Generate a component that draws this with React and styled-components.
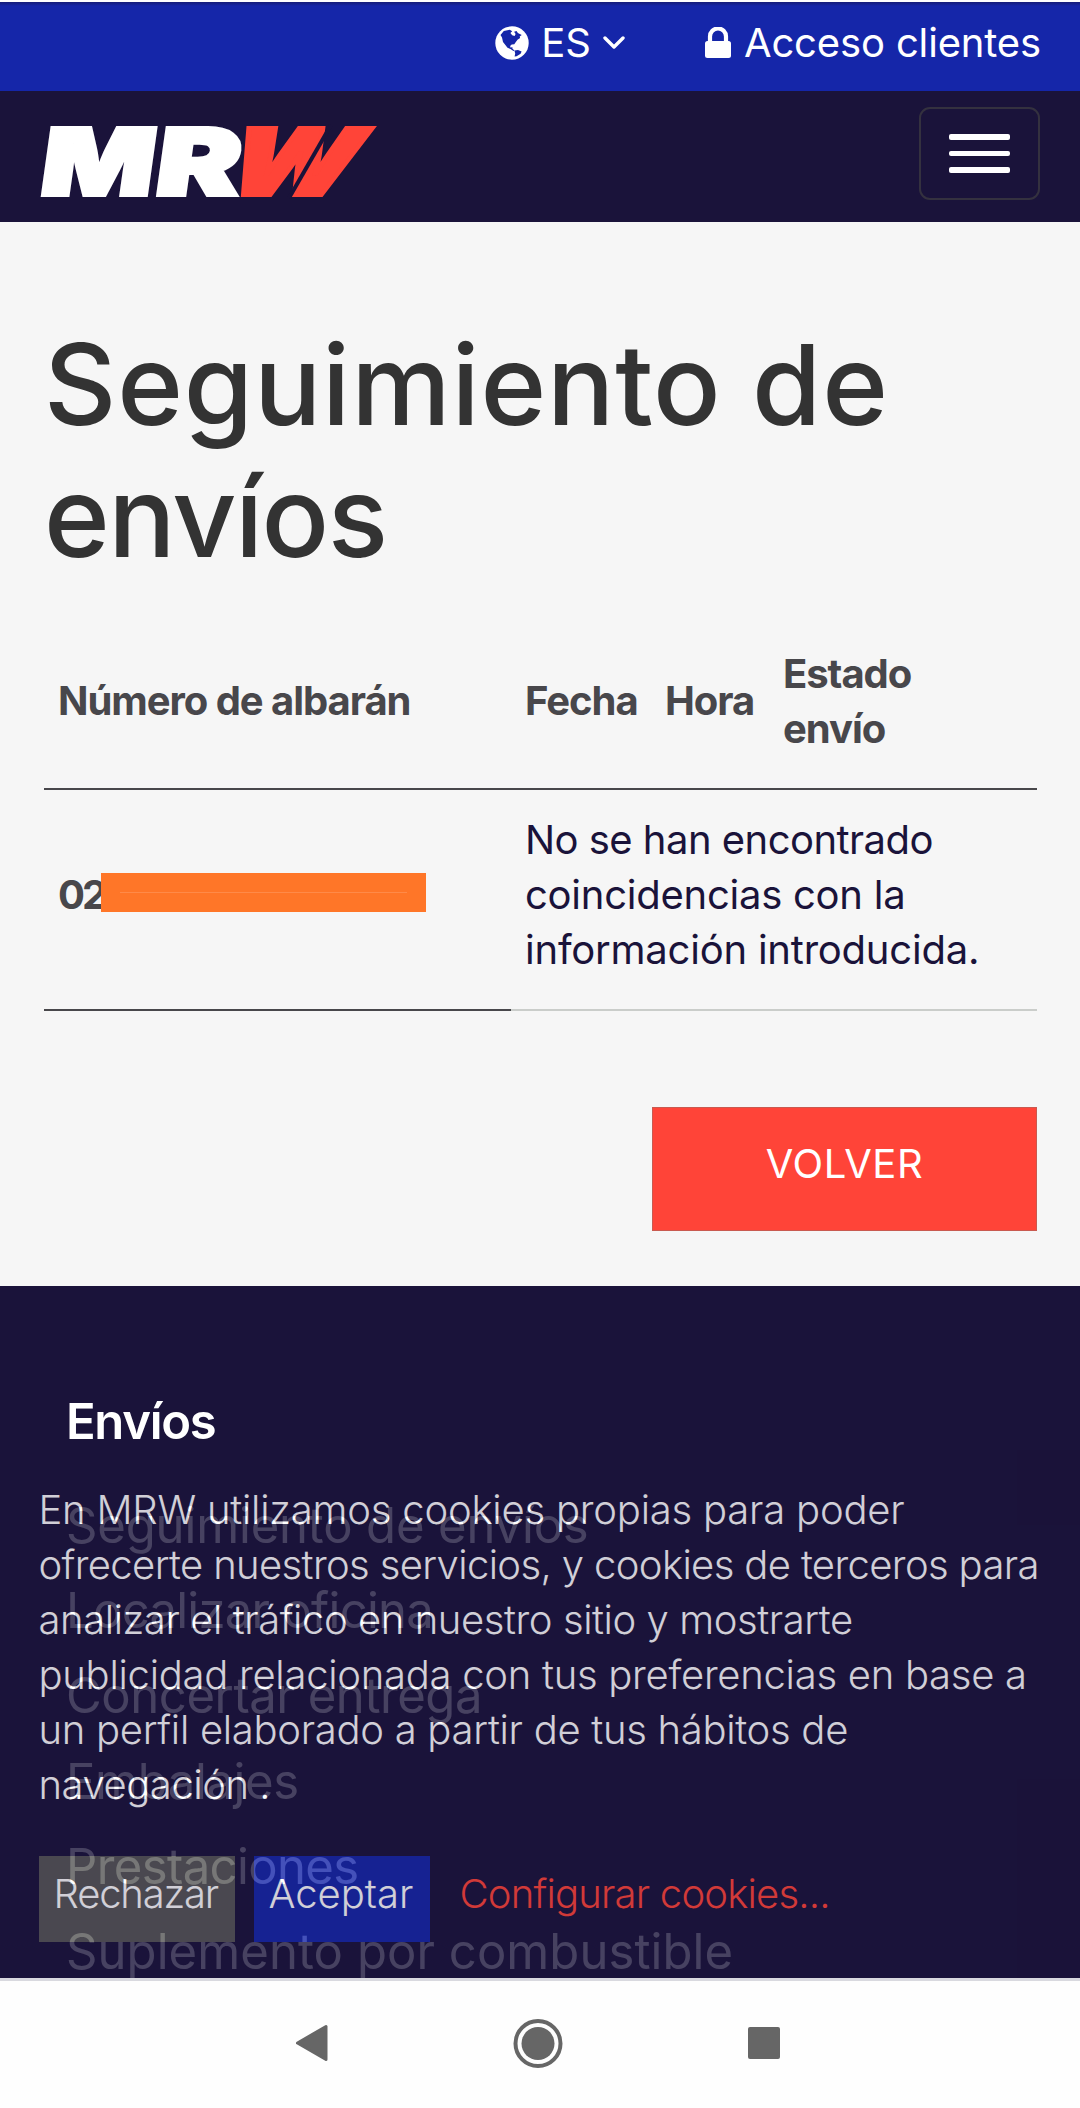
import React from 'react';
import styled, { createGlobalStyle } from 'styled-components';

const GlobalStyle = createGlobalStyle`
  * { box-sizing: border-box; }
  html, body { margin: 0; padding: 0; background: #fefefe; }
  body { font-family: Inter, "Liberation Sans", sans-serif; font-size: 40px; line-height: 55px; }
`;

const Page = styled.div`
  width: 1080px;
  height: 2108px;
  overflow: hidden;
  display: flex;
  flex-direction: column;
  border-top: 2px solid #fefefe;
`;

const TopBar = styled.div`
  height: 89px;
  flex: none;
  display: flex;
  justify-content: flex-end;
  align-items: flex-start;
  padding: 13px 39px 0 0;
  background: linear-gradient(#151c78 0, #1526a9 4px);
  color: #fff;
`;

const TopItem = styled.a`
  display: flex;
  align-items: center;
  margin-left: ${(p) => p.$before || 0}px;
  gap: ${(p) => p.$gap}px;
  letter-spacing: ${(p) => p.$ls || 0}px;
`;

const NavBar = styled.header`
  height: 131px;
  flex: none;
  display: flex;
  justify-content: space-between;
  align-items: flex-start;
  padding: 16px 40px 0 41px;
  background: #1a133a;
`;

const Logo = styled.svg`
  margin-top: 19px;
  overflow: visible;
  font-family: Inter, sans-serif;
  font-weight: 900;
`;

const MenuButton = styled.button`
  width: 121px;
  height: 93px;
  padding: 0;
  border: 2px solid #34313f;
  border-radius: 11px;
  background: none;
  display: flex;
  flex-direction: column;
  align-items: center;
  justify-content: center;
  gap: 11px;
`;

const MenuBar = styled.span`
  width: 61px;
  height: 5.6px;
  border-radius: 2px;
  background: #fff;
`;

const Main = styled.main`
  height: 1064px;
  flex: none;
  padding: 96px 43px 0 44px;
  background: #f6f6f6;
  display: flex;
  flex-direction: column;
`;

const Title = styled.h1`
  margin: 0 0 32px;
  font-size: 112px;
  line-height: 132px;
  font-weight: 500;
  color: #333;
`;

const TableRow = styled.div`
  display: grid;
  grid-template-columns: ${(p) => (p.$head ? '467px 140px 118px 268px' : '467px 526px')};
  height: ${(p) => (p.$head ? 176 : 221)}px;
`;

const Cell = styled.div`
  display: flex;
  flex-direction: column;
  justify-content: center;
  padding: ${(p) => (p.$body ? '21px 0 32px 14px' : '31px 0 32px 14px')};
  border-bottom: 2px solid ${(p) => (p.$faint ? '#cacdca' : '#48474b')};
  font-weight: ${(p) => (p.$faint ? 400 : 700)};
  letter-spacing: ${(p) => (p.$faint ? 0 : -1.05)}px;
  color: ${(p) => (p.$faint ? '#1a133a' : '#48474b')};
`;

const Albaran = styled.div`
  display: flex;
  align-items: center;
`;

const Prefix = styled.span`
  width: 43px;
  letter-spacing: -3px;
`;

const Mask = styled.span`
  width: 325px;
  height: 39px;
  margin-top: -3px;
  background: linear-gradient(#ff8a48, #ff8a48) 19px 19px / 287px 1px no-repeat #ff7628;
`;

const Line = styled.span`
  display: block;
  white-space: nowrap;
  letter-spacing: ${(p) => p.$ls || 0}px;
`;

const BackButton = styled.button`
  align-self: flex-end;
  width: 385px;
  height: 124px;
  margin-top: 96px;
  padding: 0 0 12px;
  border: 1px solid #c95a50;
  background: #ff4438;
  color: #fff;
  font: inherit;
  letter-spacing: 0.6px;
`;

const Footer = styled.footer`
  position: relative;
  height: 692px;
  flex: none;
  overflow: hidden;
  padding: 106px 0 0 66px;
  background: #1a133a;
  color: #fff;
  font-size: 49px;
`;

const FooterTitle = styled.h2`
  margin: 0 0 31px;
  font-size: 49px;
  line-height: 60px;
  font-weight: 600;
  letter-spacing: -1.3px;
`;

const FooterLinks = styled.nav`
  line-height: 85.2px;
`;

const CookieNotice = styled.section`
  position: absolute;
  left: 0;
  right: 0;
  bottom: 0;
  height: 528px;
  padding: 32px 0 0 38.5px;
  background: #1a133a;
  opacity: 0.8;
  font-size: 40px;
  font-weight: 300;
`;

const CookieActions = styled.div`
  display: flex;
  margin-top: 44px;
`;

const CookieButton = styled.button`
  width: ${(p) => p.$w}px;
  height: 86px;
  margin-right: 19px;
  padding: 0 0 11px 15px;
  border: 0;
  text-align: left;
  background: ${(p) => p.$bg};
  color: #fff;
  font: inherit;
  letter-spacing: ${(p) => p.$ls}px;
`;

const CookieLink = styled.a`
  margin: 10px 0 0 11px;
  color: #ff4438;
  letter-spacing: -0.8px;
`;

const SystemBar = styled.div`
  flex: 1;
  display: grid;
  grid-template-columns: repeat(3, 226px);
  justify-items: center;
  padding: 37px 0 0 199px;
  border-top: 3px solid #d9d9df;
  background: #fefefe;
  fill: #666;
`;

const LINKS = [
  ['Seguimiento de envíos', -0.15],
  ['Localizar oficina', -0.72],
  ['Concertar entrega', -0.42],
  ['Embalajes', -0.36],
  ['Prestaciones', -0.6],
  ['Suplemento por combustible', 0.08],
];

const COOKIE_TEXT = [
  ['En MRW utilizamos cookies propias para poder', -0.21],
  ['ofrecerte nuestros servicios, y cookies de terceros para', -0.63],
  ['analizar el tráfico en nuestro sitio y mostrarte', -0.42],
  ['publicidad relacionada con tus preferencias en base a', -0.27],
  ['un perfil elaborado a partir de tus hábitos de', -0.29],
  ['navegación .', -0.45],
];

const GlobeIcon = () => (
  <svg width="34" height="34" viewBox="0 0 34 34">
    <circle cx="17" cy="17" r="16.7" fill="#fff" />
    <g fill="#1526a9">
      <path d="M5.500 9 8.800 5l6-1.200 2.400 1.400-1.800 1.800 1.800 2.300 2.400.6 1-2-1.500-2.200 2.400-.6 1.400 2 3.800 1.800-2 1.600.4 1.600-2.600 1.600-2.200 3-1 1.600-2.600.2-1.600 1.600.6 1.600 1.600-.8.2 1.800 2 1.800-1 .6-3-2.200-3-1.200L8 16l-1-4.600z" />
      <path d="M19.400 24.600 23 24l3.600 1.600-1 2.200-4 2.400-2 .2.600-3z" />
    </g>
  </svg>
);

const LockIcon = () => (
  <svg width="26" height="32" viewBox="0 0 26 32">
    <path d="M5 16V9.500a8 8 0 0 1 16 0V16" fill="none" stroke="#fff" strokeWidth="4.2" />
    <rect x="0" y="14" width="26" height="17" rx="2.5" fill="#fff" />
  </svg>
);

const ChevronIcon = () => (
  <svg width="22" height="16" viewBox="0 0 22 16">
    <path d="M2 3l9 9 9-9" fill="none" stroke="#fff" strokeWidth="3.4" strokeLinecap="round" strokeLinejoin="round" />
  </svg>
);

const MrwLogo = () => (
  <Logo width="336" height="71" viewBox="0 0 336 71" fontSize="92" strokeWidth="4">
    <g fill="#fff" stroke="#fff">
      <text transform="translate(-3 69) skewX(-8)" textLength="113" lengthAdjust="spacingAndGlyphs">M</text>
      <text transform="translate(112 69) skewX(-8)" textLength="84" lengthAdjust="spacingAndGlyphs">R</text>
    </g>
    <text
      transform="translate(177 69) skewX(-23)"
      textLength="129"
      lengthAdjust="spacingAndGlyphs"
      fill="#ff4438"
      stroke="#ff4438"
    >
      W
    </text>
    <path d="M290 -1 248 72" stroke="#1a133a" strokeWidth="4" />
  </Logo>
);

export default function App() {
  return (
    <Page>
      <GlobalStyle />
      <TopBar>
        <TopItem $gap={12}>
          <GlobeIcon />
          <span>ES</span>
          <ChevronIcon />
        </TopItem>
        <TopItem $gap={13} $before={80} $ls={-0.15}>
          <LockIcon />
          <span>Acceso clientes</span>
        </TopItem>
      </TopBar>
      <NavBar>
        <MrwLogo />
        <MenuButton aria-label="Menú">
          <MenuBar />
          <MenuBar />
          <MenuBar />
        </MenuButton>
      </NavBar>
      <Main>
        <Title>
          <Line $ls={0.8}>Seguimiento de</Line>
          <Line $ls={-1.6}>envíos</Line>
        </Title>
        <TableRow $head>
          <Cell>Número de albarán</Cell>
          <Cell>Fecha</Cell>
          <Cell>Hora</Cell>
          <Cell>
            <span>Estado</span>
            <span>envío</span>
          </Cell>
        </TableRow>
        <TableRow>
          <Cell $body>
            <Albaran>
              <Prefix>02</Prefix>
              <Mask />
            </Albaran>
          </Cell>
          <Cell $body $faint>
            <Line $ls={-0.53}>No se han encontrado</Line>
            <Line $ls={-0.25}>coincidencias con la</Line>
            <Line $ls={-0.22}>información introducida.</Line>
          </Cell>
        </TableRow>
        <BackButton>VOLVER</BackButton>
      </Main>
      <Footer>
        <FooterTitle>Envíos</FooterTitle>
        <FooterLinks>
          {LINKS.map(([text, ls]) => (
            <Line key={text} $ls={ls}>{text}</Line>
          ))}
        </FooterLinks>
        <CookieNotice>
          {COOKIE_TEXT.map(([text, ls]) => (
            <Line key={text} $ls={ls}>{text}</Line>
          ))}
          <CookieActions>
            <CookieButton $w={196} $bg="#565656" $ls={-1.2}>Rechazar</CookieButton>
            <CookieButton $w={176} $bg="#1626a9" $ls={0}>Aceptar</CookieButton>
            <CookieLink>Configurar cookies...</CookieLink>
          </CookieActions>
        </CookieNotice>
      </Footer>
      <SystemBar>
        <svg width="50" height="50" viewBox="0 0 50 50">
          <path d="M10.500 25 39 8.500V41.500z" stroke="#666" strokeWidth="3" strokeLinejoin="round" />
        </svg>
        <svg width="50" height="50" viewBox="0 0 50 50">
          <circle cx="25" cy="25.500" r="22.500" fill="none" stroke="#666" strokeWidth="4" />
          <circle cx="25" cy="25.500" r="16.500" />
        </svg>
        <svg width="50" height="50" viewBox="0 0 50 50">
          <rect x="9" y="9" width="32" height="32" rx="2" />
        </svg>
      </SystemBar>
    </Page>
  );
}
